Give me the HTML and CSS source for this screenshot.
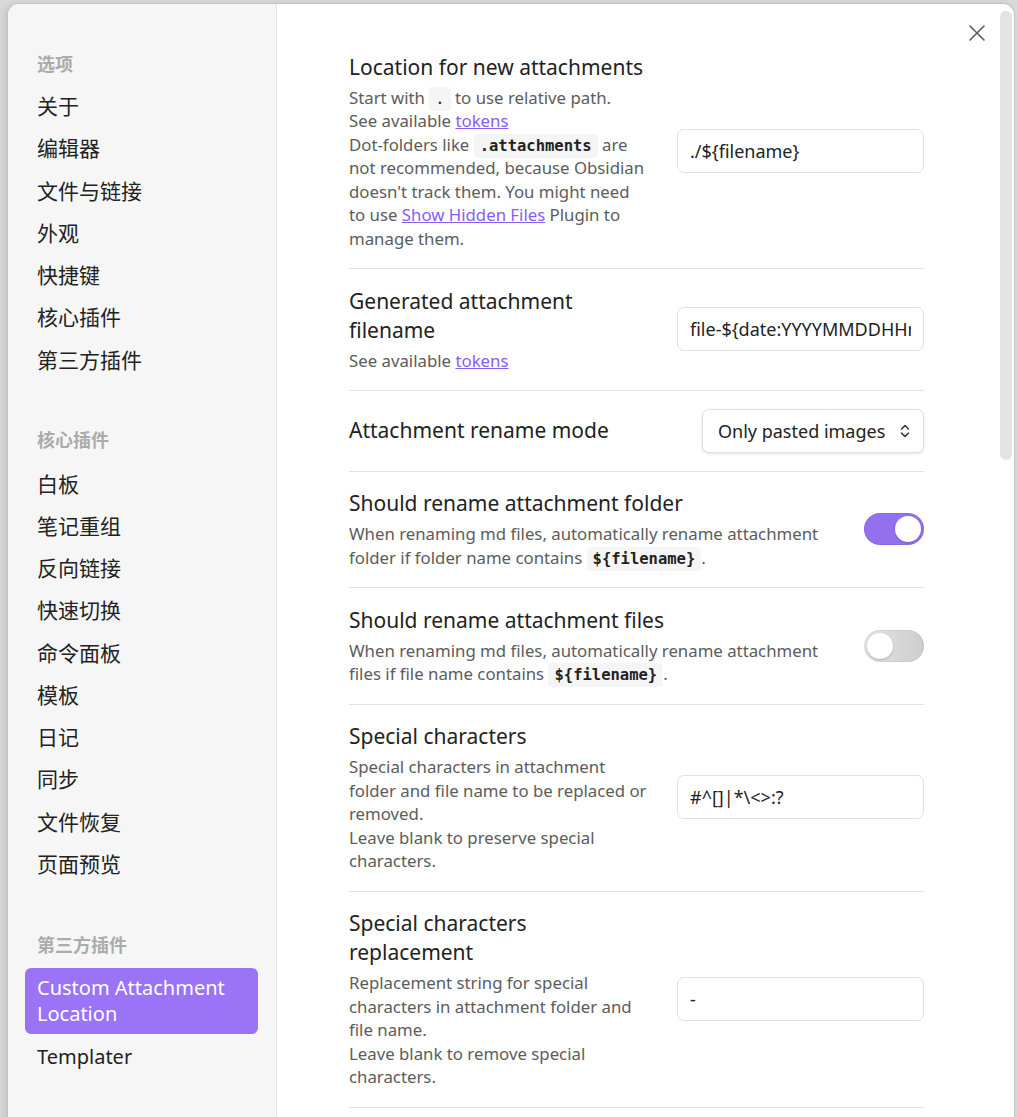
FILE: index.html
```html
<!DOCTYPE html>
<html lang="zh">
<head>
<meta charset="utf-8">
<title>Settings</title>
<link rel="stylesheet" href="styles.css">
</head>
<body>
<div class="modal">
  <nav class="sidebar">
    <div class="group">
      <div class="group-title">选项</div>
      <div class="nav-item">关于</div>
      <div class="nav-item">编辑器</div>
      <div class="nav-item">文件与链接</div>
      <div class="nav-item">外观</div>
      <div class="nav-item">快捷键</div>
      <div class="nav-item">核心插件</div>
      <div class="nav-item">第三方插件</div>
    </div>
    <div class="group">
      <div class="group-title">核心插件</div>
      <div class="nav-item">白板</div>
      <div class="nav-item">笔记重组</div>
      <div class="nav-item">反向链接</div>
      <div class="nav-item">快速切换</div>
      <div class="nav-item">命令面板</div>
      <div class="nav-item">模板</div>
      <div class="nav-item">日记</div>
      <div class="nav-item">同步</div>
      <div class="nav-item">文件恢复</div>
      <div class="nav-item">页面预览</div>
    </div>
    <div class="group">
      <div class="group-title">第三方插件</div>
      <div class="nav-item latin active">Custom Attachment Location</div>
      <div class="nav-item latin">Templater</div>
    </div>
  </nav>

  <main class="content">
    <button class="close" aria-label="Close">
      <svg width="18" height="18" viewBox="0 0 18 18"><path d="M2 2 L16 16 M16 2 L2 16" stroke="#5a5a5a" stroke-width="1.6" stroke-linecap="round" fill="none"/></svg>
    </button>

    <div class="setting">
      <div class="info">
        <div class="name">Location for new attachments</div>
        <div class="desc">Start with <code class="light">.</code> to use relative path.<br>See available <a href="#">tokens</a><br>Dot-folders like <code>.attachments</code> are not recommended, because Obsidian doesn't track them. You might need to use <a href="#">Show Hidden Files</a> Plugin to manage them.</div>
      </div>
      <div class="control"><input class="text" type="text" value="./${filename}"></div>
    </div>

    <div class="setting">
      <div class="info">
        <div class="name">Generated attachment filename</div>
        <div class="desc">See available <a href="#">tokens</a></div>
      </div>
      <div class="control"><input class="text" type="text" value="file-${date:YYYYMMDDHHmmssSSS}"></div>
    </div>

    <div class="setting">
      <div class="info">
        <div class="name">Attachment rename mode</div>
      </div>
      <div class="control">
        <div class="select">
          <span>Only pasted images</span>
          <svg width="12" height="16" viewBox="0 0 12 16"><path d="M2.5 6 L6 2.5 L9.5 6 M2.5 10 L6 13.5 L9.5 10" stroke="#333" stroke-width="1.5" fill="none" stroke-linecap="round" stroke-linejoin="round"/></svg>
        </div>
      </div>
    </div>

    <div class="setting">
      <div class="info">
        <div class="name">Should rename attachment folder</div>
        <div class="desc">When renaming md files, automatically rename attachment folder if folder name contains <code>${filename}</code>.</div>
      </div>
      <div class="control"><div class="toggle on"><div class="knob"></div></div></div>
    </div>

    <div class="setting">
      <div class="info">
        <div class="name">Should rename attachment files</div>
        <div class="desc">When renaming md files, automatically rename attachment files if file name contains <code>${filename}</code>.</div>
      </div>
      <div class="control"><div class="toggle"><div class="knob"></div></div></div>
    </div>

    <div class="setting">
      <div class="info">
        <div class="name">Special characters</div>
        <div class="desc">Special characters in attachment folder and file name to be replaced or removed.<br>Leave blank to preserve special characters.</div>
      </div>
      <div class="control"><input class="text" type="text" value="#^[]|*\&lt;&gt;:?"></div>
    </div>

    <div class="setting">
      <div class="info">
        <div class="name">Special characters replacement</div>
        <div class="desc">Replacement string for special characters in attachment folder and file name.<br>Leave blank to remove special characters.</div>
      </div>
      <div class="control"><input class="text" type="text" value="-"></div>
    </div>
  </main>

  <div class="scroll-thumb"></div>
</div>
</body>
</html>
```

FILE: styles.css
```css
html, body {
  margin: 0;
  padding: 0;
}

body {
  width: 1017px;
  height: 1117px;
  overflow: hidden;
  background: #d9d9d9;
  font-family: "Noto Sans", "Noto Sans CJK SC", sans-serif;
  color: #222;
}

.modal {
  position: relative;
  display: flex;
  margin: 3px 2px 0 7px;
  height: 1200px;
  background: #fff;
  border: 1px solid #c2c2c2;
  border-bottom: none;
  border-radius: 12px 12px 0 0;
  overflow: hidden;
  box-shadow: -3px 0 6px rgba(0, 0, 0, 0.08);
}

/* Sidebar */
.sidebar {
  flex: 0 0 269px;
  background: #f6f6f6;
  border-right: 1px solid #e2e2e2;
  padding: 47px 18px 0 17px;
  box-sizing: border-box;
}

.group + .group {
  margin-top: 48px;
}

.group:last-child {
  margin-top: 49px;
}

.group-title {
  font-family: "Noto Sans CJK SC", "Noto Sans", sans-serif;
  font-weight: 700;
  font-size: 18px;
  line-height: 24px;
  color: #ababab;
  padding-left: 12px;
  margin-bottom: 12px;
}

.group:first-child .group-title {
  margin-bottom: 10px;
}

.nav-item {
  font-family: "Noto Sans CJK SC", "Noto Sans", sans-serif;
  font-size: 21px;
  line-height: 26px;
  padding: 7px 12px;
  margin-bottom: 2.25px;
  color: #222;
  border-radius: 6px;
}

.nav-item.latin {
  font-family: "Noto Sans", sans-serif;
  font-size: 20px;
}

.nav-item.active {
  background: #9b73f6;
  color: #fff;
  margin-bottom: 3.5px;
}

/* Content */
.content {
  position: relative;
  flex: 1 1 auto;
  padding: 31px 90px 0 72px;
}

.close {
  position: absolute;
  top: 16px;
  right: 24px;
  width: 26px;
  height: 26px;
  padding: 0;
  border: none;
  background: transparent;
  display: flex;
  align-items: center;
  justify-content: center;
}

.setting {
  display: flex;
  align-items: center;
  padding: 17.5px 0 18px;
}

.setting + .setting {
  border-top: 1px solid #e3e3e3;
}

.setting:last-child {
  border-bottom: 1px solid #e3e3e3;
}

.info {
  flex: 1 1 auto;
  min-width: 0;
}

.control {
  flex: 0 0 auto;
  margin-left: 28px;
  display: flex;
  justify-content: flex-end;
}

.name {
  font-size: 21px;
  line-height: 29px;
  color: #222;
}

.desc {
  margin-top: 4px;
  font-size: 16.8px;
  line-height: 23.5px;
  color: #5c5c5c;
}

.desc a {
  color: #8a5cf5;
  text-decoration: underline;
}

code {
  font-family: "DejaVu Sans Mono", "Liberation Mono", monospace;
  font-weight: 700;
  font-size: 15.5px;
  line-height: 1;
  color: #222;
  background: #f5f5f5;
  border-radius: 4px;
  padding: 3px 6px;
}

code.light {
  font-weight: 400;
}

.text {
  box-sizing: border-box;
  width: 247px;
  height: 44px;
  border: 1px solid #e0e0e0;
  border-radius: 7px;
  padding: 0 12px;
  font-family: "Noto Sans", sans-serif;
  font-size: 18px;
  color: #222;
  background: #fff;
  outline: none;
}

.select {
  box-sizing: border-box;
  height: 44px;
  width: 222px;
  display: flex;
  align-items: center;
  justify-content: space-between;
  padding: 0 12px 0 15px;
  border: 1px solid #e0e0e0;
  border-radius: 7px;
  font-size: 18px;
  color: #222;
  background: #fff;
  box-shadow: 0 1px 3px rgba(0, 0, 0, 0.12);
}

.toggle {
  box-sizing: border-box;
  width: 60px;
  height: 32px;
  border-radius: 16px;
  background: linear-gradient(to right, #e4e4e4, #cdcdcd);
  padding: 3px;
  display: flex;
  justify-content: flex-start;
  box-shadow: inset 0 0 0 1px rgba(0, 0, 0, 0.05);
}

.toggle.on {
  background: #9270ee;
  justify-content: flex-end;
}

.knob {
  width: 26px;
  height: 26px;
  border-radius: 50%;
  background: #fff;
  box-shadow: 0 1px 2px rgba(0, 0, 0, 0.2);
}

.scroll-thumb {
  position: absolute;
  top: 7px;
  right: 2px;
  width: 12px;
  height: 449px;
  background: #e3e3e3;
  border-radius: 7px;
}
```
